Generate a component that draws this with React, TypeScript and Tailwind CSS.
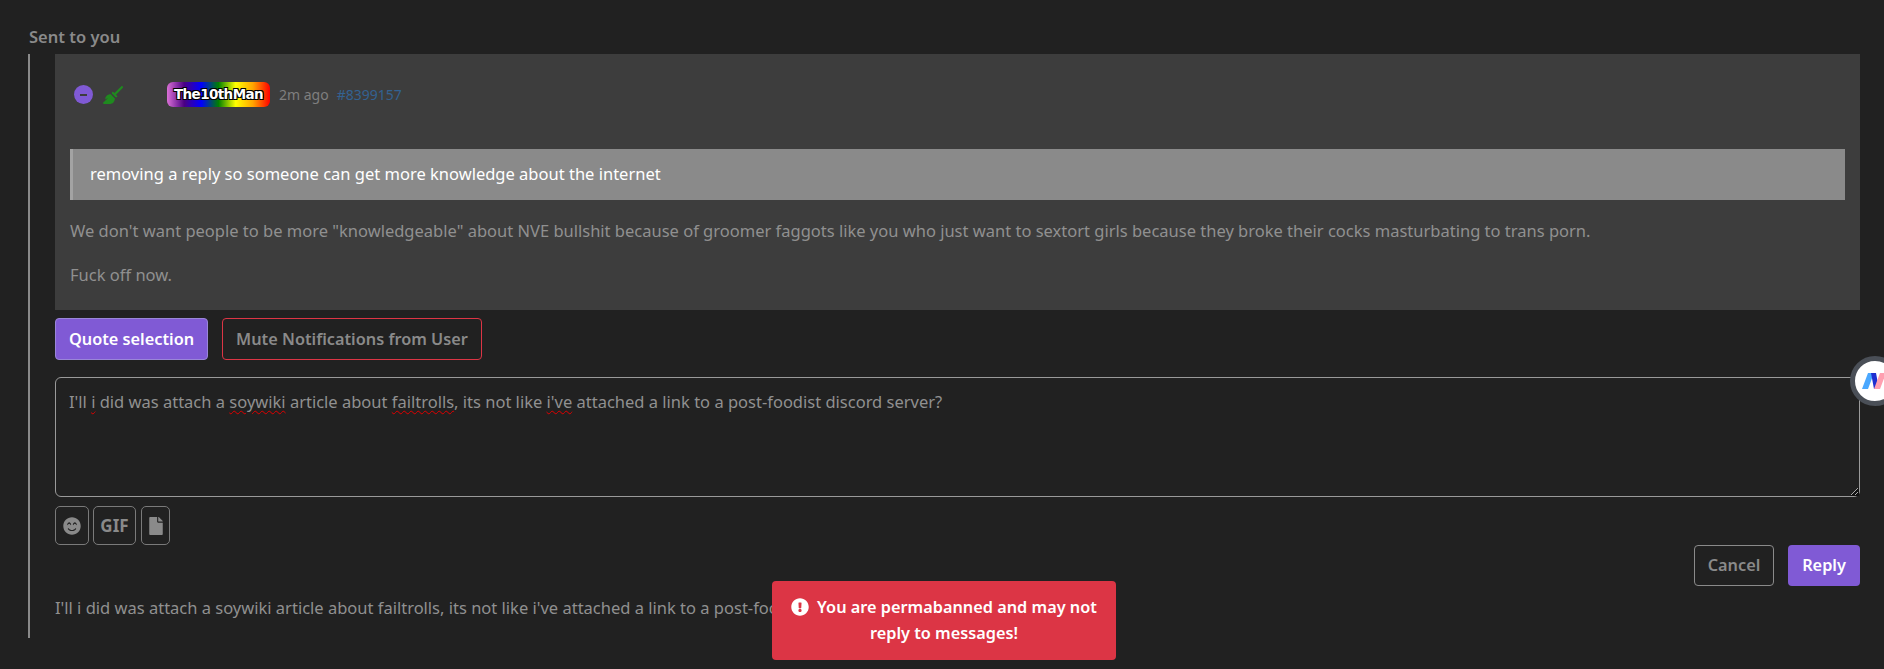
import { FaExclamationCircle, FaFile, FaSmileBeam } from "react-icons/fa";
import { FaBroom } from "react-icons/fa6";

const longText = "We don't want people to be more \"knowledgeable\" about NVE bullshit because of groomer faggots like you who just want to sextort girls because they broke their cocks masturbating to trans porn.";
const replyText = "I'll i did was attach a soywiki article about failtrolls, its not like i've attached a link to a post-foodist discord server?";

function Squiggle({ children }: { children: string }) {
  return <span className="underline decoration-wavy decoration-[#e00000] decoration-1 underline-offset-2">{children}</span>;
}

function MessageCard() {
  return (
    <div className="bg-[#3d3d3d] h-[256px] px-[15px]">
      <div className="flex items-center h-[81px]">
        <div className="ml-[4px] flex items-center justify-center w-[19px] h-[19px] rounded-full bg-[#805ad5]">
          <div className="w-[7px] h-[2px] bg-[#3d3d3d]" />
        </div>
        <FaBroom className="ml-[10px] mt-[1px] text-[#1f8a1f] text-[20px]" />
        <span className="ml-[44px] flex items-center h-[25px] px-[7px] rounded-[6px] text-white text-[13.5px] font-bold font-['DejaVu_Sans',sans-serif] tracking-[-0.6px] [text-shadow:1px_1px_0_#000,-1px_-1px_0_#000,1px_-1px_0_#000,-1px_1px_0_#000] bg-[linear-gradient(to_right,#da70d6,#4b0082,#0000ff,#008000,#ffff00,#ffa500,#ff0000)]">
          The10thMan
        </span>
        <span className="ml-[9px] text-[#7f7f7f] text-[14px]">2m ago</span>
        <span className="ml-[8px] text-[#336291] text-[14px]">#8399157</span>
      </div>
      <div className="mt-[14px] h-[51px] flex items-center bg-[#8a8a8a] border-l-[3px] border-[#a3a3a3] pl-[17px] text-white text-[16.5px]">
        removing a reply so someone can get more knowledge about the internet
      </div>
      <p className="mt-[19px] text-[16.5px] leading-[24px] text-[#909090]">{longText}</p>
      <p className="mt-[20px] text-[16.5px] leading-[24px] text-[#909090]">Fuck off now.</p>
    </div>
  );
}

function ReplyBox() {
  return (
    <div className="relative mt-[17px] h-[120px] rounded-[6px] border border-[#9a9a9a] px-[13px] py-[12px] text-[16.5px] leading-[24px] text-[#909090]">
      I'll <Squiggle>i</Squiggle> did was attach a <Squiggle>soywiki</Squiggle> article about <Squiggle>failtrolls</Squiggle>, its not like <Squiggle>i've</Squiggle> attached a link to a post-foodist discord server?
      <svg className="absolute right-0 bottom-0" width="9" height="9" viewBox="0 0 9 9">
        <path d="M0 9 L9 0 L9 9 Z" fill="#111" />
        <path d="M1 8 L8 1 M5 8 L8 5" stroke="#aaa" strokeWidth="1" />
      </svg>
    </div>
  );
}

function ToolButton({ children }: { children: React.ReactNode }) {
  return <button className="flex items-center justify-center h-[39px] rounded-[5px] border border-[#7a7a7a] text-[#8a8a8a]">{children}</button>;
}

export default function App() {
  return (
    <div className="relative h-[669px] overflow-hidden bg-[#212121] font-['Noto_Sans',sans-serif]">
      <h5 className="pl-[29px] pt-[26px] h-[54px] text-[#8a8a8a] text-[16.5px] font-semibold leading-[22px]">Sent to you</h5>
      <div className="ml-[28px] mr-[24px] h-[584px] border-l-2 border-[#8a8a8a] pl-[25px]">
        <MessageCard />
        <div className="flex gap-[14px] mt-[8px]">
          <button className="h-[42px] w-[153px] rounded-[4px] border border-[#9a86d8] bg-[#805ad5] text-white text-[16.3px] font-semibold">Quote selection</button>
          <button className="h-[42px] w-[260px] rounded-[4px] border border-[#dc3545] text-[#8a8a8a] text-[16.3px] font-semibold">Mute Notifications from User</button>
        </div>
        <ReplyBox />
        <div className="flex gap-[4px] mt-[9px]">
          <ToolButton><span className="w-[32px] flex justify-center"><FaSmileBeam className="text-[18px]" /></span></ToolButton>
          <ToolButton><span className="w-[41px] text-center text-[17px] font-bold">GIF</span></ToolButton>
          <span className="ml-[1px]">
            <ToolButton><span className="w-[27px] flex justify-center"><FaFile className="text-[18px]" /></span></ToolButton>
          </span>
        </div>
        <div className="flex justify-end gap-[14px]">
          <button className="h-[41px] w-[80px] rounded-[4px] border border-[#8a8a8a] text-[#8a8a8a] text-[16.3px] font-semibold">Cancel</button>
          <button className="h-[41px] w-[72px] rounded-[4px] bg-[#805ad5] text-white text-[16.3px] font-semibold">Reply</button>
        </div>
        <p className="mt-[10px] text-[16.5px] leading-[24px] text-[#909090]">{replyText}</p>
      </div>

      <div className="absolute left-[772px] top-[581px] w-[344px] h-[79px] rounded-[4px] bg-[#dc3545] px-[16px] py-[13px] text-center text-white text-[16.3px] font-semibold leading-[26px]">
        <FaExclamationCircle className="inline-block mr-[8px] mb-[3px] text-[18px]" />
        You are permabanned and may not reply to messages!
      </div>

      <div className="absolute left-[1850px] top-[356px] flex items-center justify-center w-[50px] h-[50px] rounded-full bg-white border-[5px] border-[#4a4f57]">
        <svg width="30" height="20" viewBox="0 0 30 20">
          <path d="M8 2 H14 L8 18 H2 Z" fill="#4aa8ff" />
          <path d="M11 2 H16 L19 18 H14 Z" fill="#1f2fd0" />
          <path d="M14 18 L20 2 H26 L20 18 Z" fill="#ff9fb0" />
        </svg>
      </div>
    </div>
  );
}
